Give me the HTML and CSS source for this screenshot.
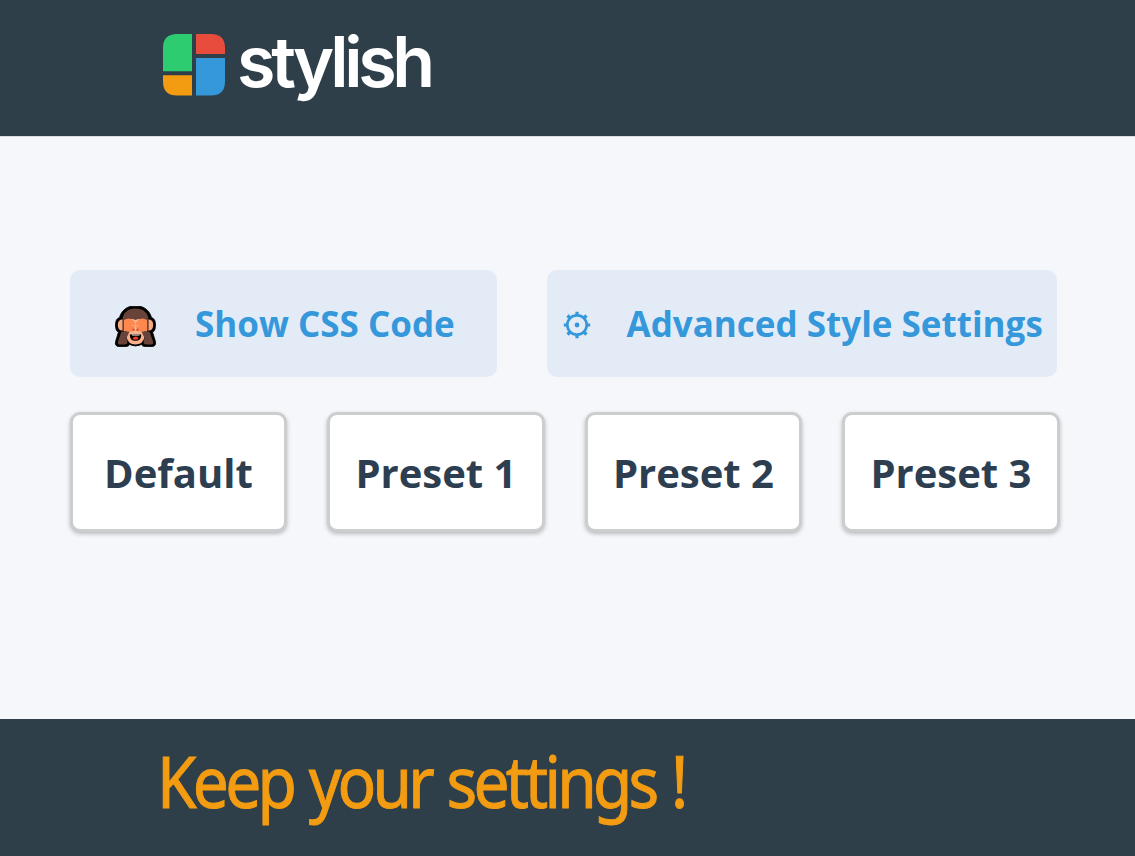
FILE: index.html
```
<!DOCTYPE html>
<html lang="en">
<head>
<meta charset="utf-8">
<title>Stylish</title>
<link rel="stylesheet" href="styles.css">
</head>
<body>
<header class="header">
  <svg class="logo" viewBox="0 0 62 63">
    <path fill="#2ecc71" d="M14 1H29V38.300H0V15Q0 1 14 1Z"/>
    <path fill="#e74c3c" d="M33 1H48Q62 1 62 15V21H33Z"/>
    <path fill="#f39c12" d="M0 42.200H29V62.500H14Q0 62.500 0 48.500Z"/>
    <path fill="#3498db" d="M33 25H62V48.500Q62 62.500 48 62.500H33Z"/>
  </svg>
  <span class="brand">stylish</span>
</header>
<main class="main">
  <div class="actions">
    <button class="action action-code">
      <svg class="monkey" viewBox="0 0 41 41">
        <path stroke="#000" stroke-width=".8" d="M15 .5H26C31 2 35 6 36.500 11.500C39.500 12.500 40.500 15 40.500 19C40.500 23 39.500 25.500 37.500 26L40 34C41.500 38.500 40 40.500 37 40.500H30C28 40.500 27 39.500 26.500 38.500Q20.500 41.500 14.500 38.500C14 39.500 13 40.500 11 40.500H4C1 40.500-.5 38.500 1 34L3.500 26C1.500 25.500 .5 23 .5 19C.5 15 1.500 12.500 4.500 11.500C6 6 10 2 15 .5Z"/>
        <path fill="#67433a" d="M20.500 2.500C13 2.500 7.500 7 7.500 14V25H33.500V14C33.500 7 28 2.500 20.500 2.500Z"/>
        <path fill="#f8a880" d="M7.500 13.500Q2.800 13.500 2.800 19Q2.800 24.500 7.500 24.500ZM33.500 13.500Q38.200 13.500 38.200 19Q38.200 24.500 33.500 24.500Z"/>
        <path fill="#f8b18b" d="M12 18Q14 11 20.500 14Q27 11 29 18L29.500 31Q28 38.500 20.500 38.500Q13 38.500 11.500 31Z"/>
        <path fill="#ff8850" d="M9 14Q14 11 17.500 14Q20.500 17 21 19L17 25.500H9ZM32 14Q27 11 23.500 14Q20.500 17 20 19L24 25.500H32Z"/>
        <path fill="none" stroke="#ffae88" stroke-width=".8" d="M17 19.500H24M20.500 15V22"/>
        <path fill="#67433a" d="M6.500 25.500H14.500L11.500 32L12.500 36Q12.500 38.500 9 38.500H4Q2.500 38.500 3 35.500ZM34.500 25.500H26.500L29.500 32L28.500 36Q28.500 38.500 32 38.500H37Q38.500 38.500 38 35.500Z"/>
        <path d="M14.800 28.500H26.200Q26.500 34.800 20.500 34.800Q14.500 34.800 14.800 28.500Z"/>
        <path fill="#fff" d="M17 28.700H24.500V29.500H17Z"/>
        <path fill="#f53b20" d="M17.500 33Q18 30.500 20.700 30.500Q23.500 30.500 23.500 33Q20.500 34.500 17.500 33Z"/>
        <circle cx="18.500" cy="23.700" r="1.300" fill="#d85232"/><circle cx="22.500" cy="23.700" r="1.300" fill="#d85232"/>
      </svg>
      <span class="label">Show CSS Code</span>
    </button>
    <button class="action action-settings">
      <svg class="gear" viewBox="-14 -14 28 28">
        <circle r="9.700" fill="none" stroke="#3498db" stroke-width="2.700"/>
        <circle r="2.400" fill="#3498db"/>
        <path fill="none" stroke="#3498db" stroke-width="3.200" d="M0-10V-13.200M0 10V13.200M-10 0H-13.200M10 0H13.200M-7-7L-9.500-9.500M7-7L9.500-9.500M-7 7L-9.500 9.500M7 7L9.500 9.500"/>
      </svg>
      <span class="label">Advanced Style Settings</span>
    </button>
  </div>
  <div class="presets">
    <button class="preset">Default</button>
    <button class="preset">Preset 1</button>
    <button class="preset">Preset 2</button>
    <button class="preset">Preset 3</button>
  </div>
</main>
<footer class="footer"><span class="slogan">Keep your settings !</span></footer>
</body>
</html>
```
FILE: styles.css
```
* { box-sizing: border-box; }
body {
  margin: 0;
  height: 856px;
  display: flex;
  flex-direction: column;
  overflow: hidden;
  background: #f5f7fb;
  font-family: "Open Sans", "Noto Sans", sans-serif;
}
button { font: inherit; margin: 0; border: 0; padding: 0; white-space: nowrap; }
.header {
  height: 137px;
  flex: none;
  display: flex;
  align-items: flex-start;
  padding: 33px 0 0 163px;
  gap: 12px;
  background: #2f3f49;
  border-bottom: 1px solid #d9dce0;
}
.logo { width: 62px; height: 63px; flex: none; }
.brand {
  margin-top: -11px;
  font: 600 70px/80px Inter, sans-serif;
  letter-spacing: -4.3px;
  color: #fff;
}
.main { flex: 1; padding: 133px 75px 0 70px; }
.actions { display: flex; gap: 50px; }
.action {
  display: flex;
  align-items: center;
  height: 107px;
  border-radius: 10px;
  background: #e3ebf7;
  color: #3498db;
  font-size: 35px;
  font-weight: 700;
}
.action-code { width: 427px; padding-left: 45px; gap: 39px; }
.action-settings { width: 510px; padding-left: 16px; gap: 35.5px; }
.monkey { width: 41px; height: 41px; flex: none; margin-top: 5px; overflow: visible; }
.gear { width: 28px; height: 28px; flex: none; margin-top: 3px; }
.label { line-height: 50px; margin-top: 1px; }
.presets {
  display: grid;
  grid-template-columns: repeat(4, 217.5px);
  gap: 40px;
  margin-top: 35px;
  margin-left: -0.3px;
}
.preset {
  height: 120px;
  border: 3px solid #cccdcf;
  border-radius: 10px;
  background: #fff;
  box-shadow: 0 2px 4px #b8babd;
  color: #2c3e50;
  font-size: 40px;
  font-weight: 700;
}
.footer {
  height: 137px;
  flex: none;
  padding: 18px 0 0 157px;
  background: #2f3f49;
}
.slogan {
  display: inline-block;
  font: 400 71px/88px "Noto Sans", sans-serif;
  letter-spacing: -4.2px;
  word-spacing: 3px;
  white-space: nowrap;
  transform-origin: left;
  transform: scaleX(.902);
  -webkit-text-stroke: 1px #f39c12;
  color: #f39c12;
}
```
